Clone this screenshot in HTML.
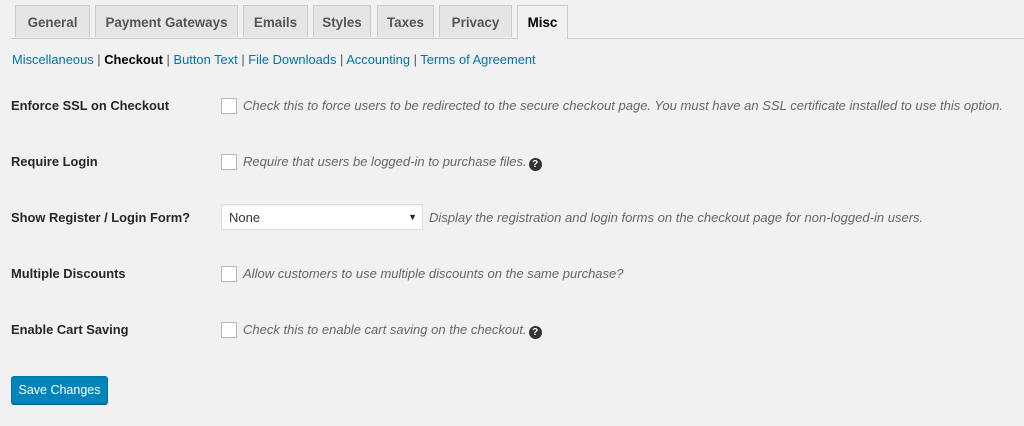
<!DOCTYPE html>
<html><head><style>
body{margin:0;width:1024px;height:426px;background:#f1f1f1;font-family:"Liberation Sans",sans-serif;font-size:13px;color:#23282d;position:relative;overflow:hidden}
.a{position:absolute;white-space:nowrap}
.tab{position:absolute;top:5px;height:32px;background:#e5e5e5;border:1px solid #ccc;border-bottom:none;font-weight:bold;font-size:13.4px;color:#555;text-align:center;line-height:33px;box-sizing:border-box}
.line{position:absolute;left:11px;right:0;top:38px;border-top:1px solid #ccc}
.sub{left:12px;top:52px;color:#0073aa;font-size:12.9px}
.sub b{color:#000}
.sub .s{color:#555}
.lab{left:11px;font-weight:bold;font-size:12.9px}
.cb{position:absolute;left:221px;width:16px;height:16px;background:#fff;border:1px solid #b4b9be;box-sizing:border-box}
.d{font-style:italic;color:#666;font-size:13.02px}
.q{display:inline-block;width:13px;height:13px;border-radius:50%;background:#333;color:#fff;font-style:normal;font-weight:bold;font-size:10px;line-height:13px;text-align:center;vertical-align:-1px;margin-left:2px}
</style></head><body>
<div class="tab" style="left:15px;width:75px">General</div>
<div class="tab" style="left:95px;width:143px">Payment Gateways</div>
<div class="tab" style="left:243px;width:65px">Emails</div>
<div class="tab" style="left:313px;width:58px">Styles</div>
<div class="tab" style="left:377px;width:57px">Taxes</div>
<div class="tab" style="left:439px;width:73px">Privacy</div>
<div class="line"></div>
<div class="tab" style="left:517px;width:51px;height:34px;background:#f1f1f1;color:#000">Misc</div>
<div class="a sub">Miscellaneous <span class="s">|</span> <b>Checkout</b> <span class="s">|</span> Button Text <span class="s">|</span> File Downloads <span class="s">|</span> Accounting <span class="s">|</span> Terms of Agreement</div>

<div class="a lab" style="top:98px">Enforce SSL on Checkout</div>
<div class="cb" style="top:98px"></div>
<div class="a d" style="left:243px;top:98px">Check this to force users to be redirected to the secure checkout page. You must have an SSL certificate installed to use this option.</div>

<div class="a lab" style="top:154px">Require Login</div>
<div class="cb" style="top:154px"></div>
<div class="a d" style="left:243px;top:154px">Require that users be logged-in to purchase files.<span class="q">?</span></div>

<div class="a lab" style="top:210px">Show Register / Login Form?</div>
<div class="a" style="left:221px;top:204px;width:202px;height:26px;background:#fff;border:1px solid #ddd;box-sizing:border-box;box-shadow:inset 0 1px 2px rgba(0,0,0,.07)"><span class="a" style="left:7px;top:5px;font-size:13px;color:#32373c">None</span><span class="a" style="right:5px;top:7px;font-size:9px;color:#222">▼</span></div>
<div class="a d" style="left:429px;top:210px">Display the registration and login forms on the checkout page for non-logged-in users.</div>

<div class="a lab" style="top:266px">Multiple Discounts</div>
<div class="cb" style="top:266px"></div>
<div class="a d" style="left:243px;top:266px">Allow customers to use multiple discounts on the same purchase?</div>

<div class="a lab" style="top:322px">Enable Cart Saving</div>
<div class="cb" style="top:322px"></div>
<div class="a d" style="left:243px;top:322px">Check this to enable cart saving on the checkout.<span class="q">?</span></div>

<div class="a" style="left:11px;top:376px;width:97px;height:28px;background:#0085ba;border:1px solid #0073aa;border-radius:3px;box-sizing:border-box;color:#fff;font-size:12.5px;line-height:26px;text-align:center;box-shadow:0 1px 0 #006799">Save Changes</div>
</body></html>
